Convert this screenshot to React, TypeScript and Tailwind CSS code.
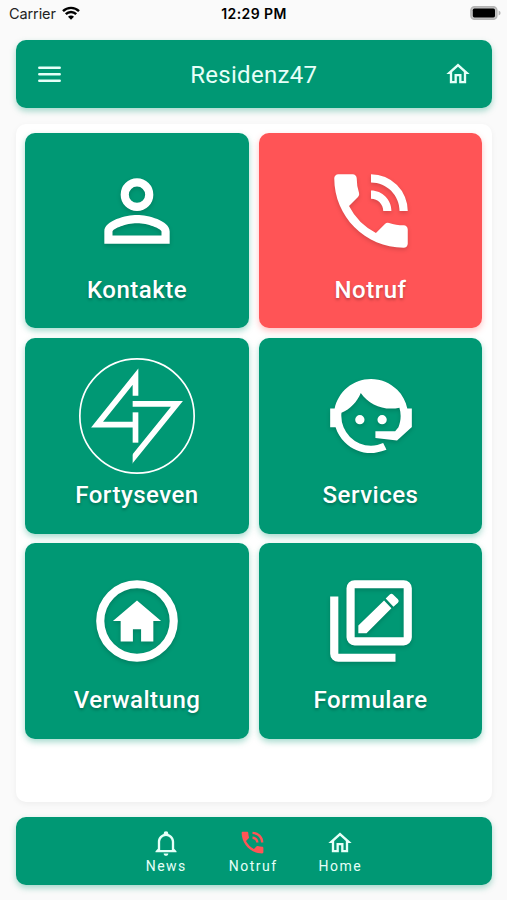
import type { ReactNode } from 'react'
import { MdPhoneInTalk } from 'react-icons/md'

const iconShadow = 'drop-shadow-[0_2px_2px_rgba(0,0,0,0.16)]'

function Icon({ d, className }: { d: string; className?: string }) {
  return (
    <svg viewBox="0 0 24 24" fill="currentColor" fillRule="evenodd" className={className}>
      <path d={d} />
    </svg>
  )
}

const icons = {
  home: 'M12 5.69l5 4.5V18h-2v-6H9v6H7v-7.81l5-4.5M12 3L2 12h3v8h6v-6h2v6h6v-8h3L12 3z',
  bell: 'M10 21h4c0 1.1-.9 2-2 2s-2-.9-2-2zM21 19v1H3v-1l2-2v-6c0-3.1 2.03-5.83 5-6.71V4a2 2 0 0 1 4 0v.29c2.97.88 5 3.61 5 6.71v6l2 2zM17 11a5 5 0 0 0-10 0v7h10v-7z',
  person:
    'M12 6a2 2 0 1 1 0 4 2 2 0 0 1 0-4zM12 4a4 4 0 1 0 0 8 4 4 0 0 0 0-8zM12 13c-2.67 0-8 1.34-8 4v3h16v-3c0-2.66-5.33-4-8-4zM18 18H6v-.99c.2-.72 3.3-2.01 6-2.01s5.8 1.29 6 2v1z',
  agent:
    'M18.72 14.76C19.07 13.91 19.26 13 19.26 12C19.26 11.28 19.15 10.59 18.96 9.95C18.31 10.1 17.63 10.18 16.92 10.18C13.86 10.18 11.15 8.67 9.5 6.34C8.61 8.5 6.91 10.26 4.77 11.22C4.73 11.47 4.73 11.74 4.73 12A7.27 7.27 0 0 0 12 19.27C13.05 19.27 14.06 19.04 14.97 18.63C15.54 19.72 15.8 20.26 15.78 20.26C14.14 20.81 12.87 21.08 12 21.08C9.58 21.08 7.27 20.13 5.57 18.42C4.53 17.38 3.76 16.11 3.33 14.73H2V10.18H3.09C3.93 6.04 7.6 2.92 12 2.92C14.4 2.92 16.71 3.87 18.42 5.58C19.69 6.84 20.54 8.45 20.89 10.18H22V14.73H21.94L18.38 18L13.08 17.4V15.73H17.91L18.72 14.76M9.27 11.77a1.14 1.14 0 1 1 0 2.28a1.14 1.14 0 0 1 0-2.28M14.72 11.77a1.14 1.14 0 1 1 0 2.28a1.14 1.14 0 0 1 0-2.28',
  homeCircle: 'M12 2a10 10 0 1 0 0 20a10 10 0 0 0 0-20zM12 4a8 8 0 1 1 0 16a8 8 0 0 1 0-16zM12 7l-5.9 5H8v5h3v-3h2v3h3v-5h1.9z',
  forms:
    'M4 6H2v14a2 2 0 0 0 2 2h14v-2H4zM8 2h12a2 2 0 0 1 2 2v12a2 2 0 0 1-2 2H8a2 2 0 0 1-2-2V4a2 2 0 0 1 2-2zM8 4v12h12V4zM8.9 13.1l6.3-6.1 1.8 1.9-6.1 6.1H8.9zM15.6 6.5l1-1q.4-.4.8 0l1.2 1.2q.4.4 0 .8l-1.1 1z',
}

function MenuIcon() {
  return (
    <svg viewBox="0 0 23 16" className="h-4 w-[23px] stroke-current" strokeWidth="2.5" strokeLinecap="round">
      <path d="M1.3 1.8h20.4M1.3 8.3h20.4M1.3 14.7h20.4" />
    </svg>
  )
}

function FortysevenLogo() {
  return (
    <svg viewBox="192 83 348 348" fill="none" stroke="currentColor" className="size-[116px]">
      <clipPath id="seven">
        <rect x="353" y="200" width="180" height="220" />
      </clipPath>
      <circle cx="366" cy="257" r="171.5" strokeWidth="5" />
      <g strokeWidth="17" strokeMiterlimit="10">
        <polyline points="361.5,196 361.5,139 246,283 361.5,283" />
        <polyline points="361.5,246 361.5,337" />
        <polyline points="340,220.5 486,220.5 340,401" clipPath="url(#seven)" />
      </g>
    </svg>
  )
}

function Tile({ label, danger, children }: { label: string; danger?: boolean; children: ReactNode }) {
  return (
    <div
      className={`flex flex-col items-center rounded-[10px] pt-5 text-white ${
        danger ? 'bg-[#ff5456] shadow-[0_3px_6px_rgba(255,84,86,0.35)]' : 'bg-[#009874] shadow-[0_3px_6px_rgba(0,152,116,0.35)]'
      }`}
    >
      <div className="flex h-[116px] items-center justify-center">{children}</div>
      <span className="mt-[5px] text-2xl leading-8 font-medium tracking-[0.5px] [text-shadow:0_2px_3px_rgba(0,0,0,0.25)]">
        {label}
      </span>
    </div>
  )
}

function NavItem({ label, children }: { label: string; children: ReactNode }) {
  return (
    <div className="flex w-[87px] flex-col items-center text-[#e6fff8]">
      <div className="flex h-7 items-center">{children}</div>
      <span className="text-sm leading-[18px] tracking-[1.5px]">{label}</span>
    </div>
  )
}

export default function App() {
  return (
    <div className="flex h-[900px] w-[507px] flex-col overflow-hidden bg-[#fafafa] pr-[15px] pl-[15.5px] font-['Roboto','Liberation_Sans',sans-serif]">
      <div className="-mr-[15px] -ml-[15.5px] grid h-10 grid-cols-3 items-start px-[9px] pt-[3px] font-['Inter','Liberation_Sans',sans-serif] text-[14.5px] leading-[22px] text-[#222]">
        <div className="flex items-center gap-[6px]">
          <span className="tracking-[-0.1px]">Carrier</span>
          <svg viewBox="0 0 18 14" className="-mt-[2px] h-[14px] w-[18px]" fill="none" stroke="#000" strokeWidth="2.4">
            <path d="M1 5.2a11.3 11.3 0 0 1 16 0M3.8 8.2a7.3 7.3 0 0 1 10.4 0" />
            <path d="M9 13.8L6 10.8a4.2 4.2 0 0 1 6 0z" fill="#000" stroke="none" />
          </svg>
        </div>
        <span className="pl-px text-center text-[14px] font-semibold tracking-[0.4px] text-black">12:29 PM</span>
        <svg viewBox="0 0 31 15" className="mt-[3px] -mr-[3px] h-[15px] w-[31px] justify-self-end">
          <rect x="0.9" y="0.7" width="26" height="12.6" rx="3.6" fill="#c4c4c4" stroke="#b4b4b4" strokeWidth="1.4" />
          <rect x="2.8" y="2.6" width="22.2" height="8.8" rx="1.6" fill="#000" />
          <path d="M28.6 4.6q2 .8 2 2.4t-2 2.4z" fill="#b4b4b4" />
        </svg>
      </div>

      <header className="flex h-[68px] shrink-0 items-center justify-between rounded-[10px] bg-[#009874] px-[22px] text-[#e6fff8] shadow-[0_3px_6px_rgba(0,152,116,0.35)]">
        <MenuIcon />
        <h1 className="mt-[2px] ml-[3px] text-2xl leading-8 font-normal tracking-[0.3px]">Residenz47</h1>
        <Icon d={icons.home} className="-mr-[2px] size-7" />
      </header>

      <main className="mt-4 h-[678px] shrink-0 rounded-[10px] bg-white px-[9.75px] pt-[9px] shadow-[0_2px_6px_rgba(0,0,0,0.05)]">
        <div className="grid auto-rows-[195.4px] grid-cols-2 gap-x-[10px] gap-y-[9.75px]">
          <Tile label="Kontakte">
            <Icon d={icons.person} className={`size-[98px] ${iconShadow}`} />
          </Tile>
          <Tile label="Notruf" danger>
            <MdPhoneInTalk className={`size-[98px] ${iconShadow}`} />
          </Tile>
          <Tile label="Fortyseven">
            <FortysevenLogo />
          </Tile>
          <Tile label="Services">
            <Icon d={icons.agent} className={`size-[98px] ${iconShadow}`} />
          </Tile>
          <Tile label="Verwaltung">
            <Icon d={icons.homeCircle} className={`size-[98px] ${iconShadow}`} />
          </Tile>
          <Tile label="Formulare">
            <Icon d={icons.forms} className={`size-[98px] ${iconShadow}`} />
          </Tile>
        </div>
      </main>

      <nav className="mt-[15px] flex h-[68px] shrink-0 justify-center rounded-[10px] bg-[#009874] pt-[11.5px] pr-[1px] shadow-[0_3px_6px_rgba(0,152,116,0.35)]">
        <NavItem label="News">
          <Icon d={icons.bell} className="-ml-px size-7" />
        </NavItem>
        <NavItem label="Notruf">
          <MdPhoneInTalk className="-ml-[2px] size-[29px] text-[#ff5456]" />
        </NavItem>
        <NavItem label="Home">
          <Icon d={icons.home} className="-ml-px size-7" />
        </NavItem>
      </nav>
    </div>
  )
}
